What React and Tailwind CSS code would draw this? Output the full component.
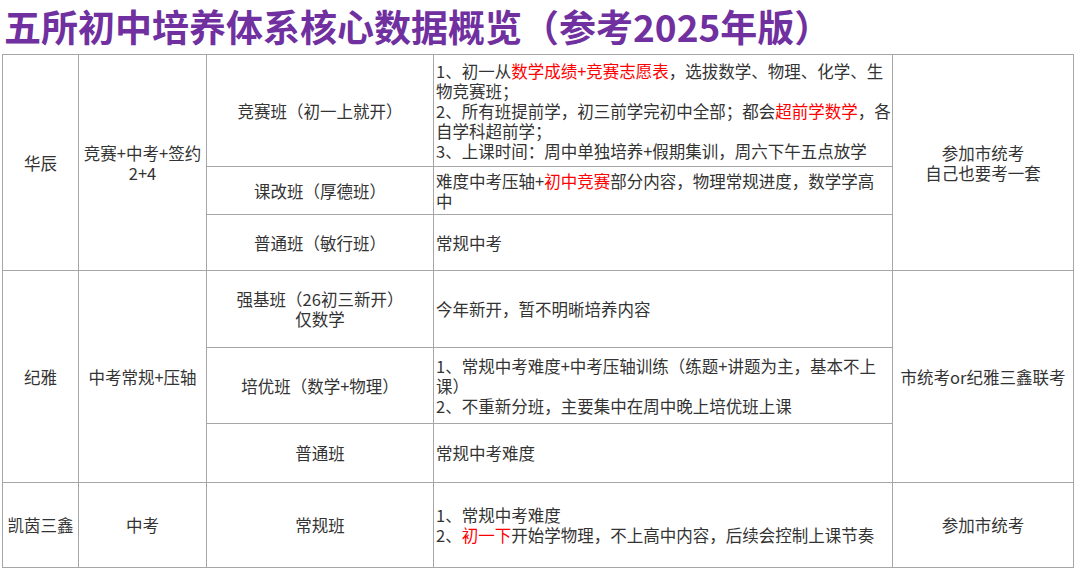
import React from "react";

const Red = ({ children }) => <span className="text-[#ff0000]">{children}</span>;

const Lines = ({ children }) => (
  <div className="whitespace-nowrap">{children}</div>
);

const td = "border border-[#a6a6a6] p-0 align-middle";
const center = `${td} text-center`;
const left = `${td} text-left pl-[2px]`;

export default function App() {
  return (
    <div
      className="w-[1080px] h-[575px] bg-white overflow-hidden"
      style={{ fontFamily: '"Noto Sans CJK SC", "Noto Sans", sans-serif' }}
    >
      <h1 className="pl-[4px] h-[54px] leading-[52px] text-[37px] font-bold text-[#7030a0] whitespace-nowrap">
        五所初中培养体系核心数据概览（参考2025年版）
      </h1>

      <table className="ml-[2px] w-[1071px] table-fixed border-collapse text-[16.5px] leading-[20px] text-[#333]">
        <colgroup>
          <col className="w-[76px]" />
          <col className="w-[128px]" />
          <col className="w-[227px]" />
          <col className="w-[459px]" />
          <col className="w-[181px]" />
        </colgroup>
        <tbody>
          <tr className="h-[112px]">
            <td rowSpan={3} className={center}>华辰</td>
            <td rowSpan={3} className={center}>
              <Lines>竞赛+中考+签约</Lines>
              <Lines>2+4</Lines>
            </td>
            <td className={center}>竞赛班（初一上就开）</td>
            <td className={left}>
              <Lines>1、初一从<Red>数学成绩+竞赛志愿表</Red>，选拔数学、物理、化学、生</Lines>
              <Lines>物竞赛班；</Lines>
              <Lines>2、所有班提前学，初三前学完初中全部；都会<Red>超前学数学</Red>，各</Lines>
              <Lines>自学科超前学；</Lines>
              <Lines>3、上课时间：周中单独培养+假期集训，周六下午五点放学</Lines>
            </td>
            <td rowSpan={3} className={center}>
              <Lines>参加市统考</Lines>
              <Lines>自己也要考一套</Lines>
            </td>
          </tr>
          <tr className="h-[48px]">
            <td className={center}>课改班（厚德班）</td>
            <td className={left}>
              <Lines>难度中考压轴+<Red>初中竞赛</Red>部分内容，物理常规进度，数学学高</Lines>
              <Lines>中</Lines>
            </td>
          </tr>
          <tr className="h-[56px]">
            <td className={center}>普通班（敏行班）</td>
            <td className={left}>常规中考</td>
          </tr>

          <tr className="h-[77px]">
            <td rowSpan={3} className={center}>纪雅</td>
            <td rowSpan={3} className={center}>中考常规+压轴</td>
            <td className={center}>
              <Lines>强基班（26初三新开）</Lines>
              <Lines>仅数学</Lines>
            </td>
            <td className={left}>今年新开，暂不明晰培养内容</td>
            <td rowSpan={3} className={center}>市统考or纪雅三鑫联考</td>
          </tr>
          <tr className="h-[76px]">
            <td className={center}>培优班（数学+物理）</td>
            <td className={left}>
              <Lines>1、常规中考难度+中考压轴训练（练题+讲题为主，基本不上</Lines>
              <Lines>课）</Lines>
              <Lines>2、不重新分班，主要集中在周中晚上培优班上课</Lines>
            </td>
          </tr>
          <tr className="h-[59px]">
            <td className={center}>普通班</td>
            <td className={left}>常规中考难度</td>
          </tr>

          <tr className="h-[85px]">
            <td className={center}>凯茵三鑫</td>
            <td className={center}>中考</td>
            <td className={center}>常规班</td>
            <td className={left}>
              <Lines>1、常规中考难度</Lines>
              <Lines>2、<Red>初一下</Red>开始学物理，不上高中内容，后续会控制上课节奏</Lines>
            </td>
            <td className={center}>参加市统考</td>
          </tr>
        </tbody>
      </table>
    </div>
  );
}
